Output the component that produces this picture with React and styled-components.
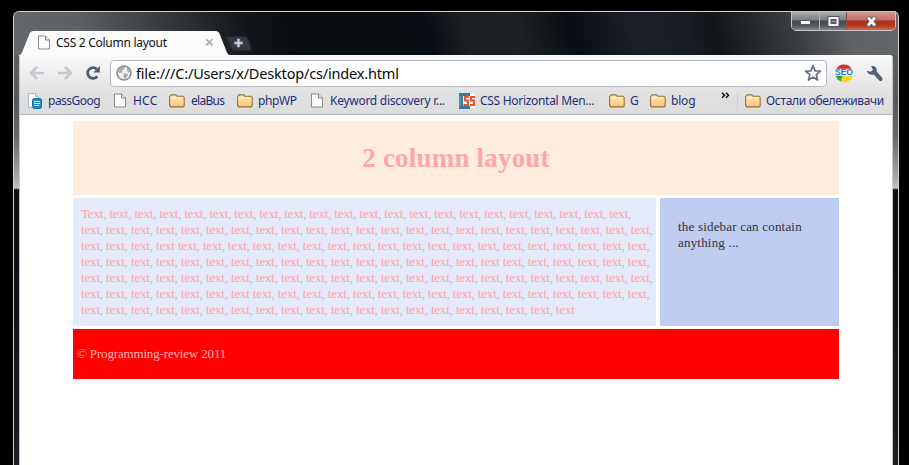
import React from "react";
import styled, { createGlobalStyle } from "styled-components";

const GlobalStyle = createGlobalStyle`
  * { box-sizing: border-box; }
  html, body { margin: 0; background: #000; overflow: hidden; }
  svg { display: block; flex: none; }
`;

const Desktop = styled.div`
  height: 465px;
  padding: 11px 10px 0 13px;
  background: #000;
  font-family: "Noto Sans", "Open Sans", sans-serif;
`;

const Window = styled.div`
  height: 454px;
  padding: 0 5px;
  border: 1px solid #d2d2d2;
  border-bottom: 0;
  border-radius: 6px 6px 0 0;
  background:
    linear-gradient(180deg, #65686a 0, #54585a 90px, #64686a 125px, #a5a7a8 165px, #c2c2c2 176px, #59686b 177px, #0b1014 178px, #0b1116 250px, #1a1f25 100%);
`;

const TitleBar = styled.div`
  display: flex;
  justify-content: space-between;
  height: 43px;
  margin: 0 -5px;
  padding-left: 4px;
  border-radius: 5px 5px 0 0;
  background: linear-gradient(75deg, #65686a 0, #5e6164 8%, #3a3d40 17%, #111519 27%, #090e13 32%, #090e14 47%, #1b1f24 51%, #1d2126 57%, #080e13 63%, #1b1f27 70%, #181c23 76%, #111519 79%, #3b3e40 88%, #606365 94%, #656869 100%);
`;

const TabStrip = styled.div`
  display: flex;
  padding-top: 18px;
`;

const Tab = styled.div`
  position: relative;
  width: 213px;
  height: 26px;
`;

const TabShape = styled.svg`
  position: absolute;
  inset: 0;
`;

const TabContent = styled.div`
  position: relative;
  display: flex;
  align-items: center;
  height: 25px;
  padding-left: 19px;
`;

const TabTitle = styled.span`
  width: 149px;
  margin-left: 5px;
  font: 12px/16px "Noto Sans", sans-serif;
  letter-spacing: -0.27px;
  white-space: nowrap;
  color: #111;
`;

const NewTab = styled.div`
  margin: 6px 0 0 -5px;
`;

const Caption = styled.div`
  display: flex;
  width: 105px;
  height: 20px;
  margin: -1px 2px 0 0;
  border: 1px solid #c4c6c8;
  border-radius: 0 0 5px 5px;
  overflow: hidden;
`;

const CaptionButton = styled.div`
  display: flex;
  align-items: center;
  justify-content: center;
  width: ${(p) => p.$width}px;
  border-left: ${(p) => (p.$first ? 0 : 1)}px solid ${(p) => (p.$close ? "#8d4b40" : "#b7b9bb")};
  background: ${(p) =>
    p.$close
      ? "linear-gradient(#d19a90 0, #c37064 8px, #ad2e1c 9px, #b63b25 14px, #d17153 100%)"
      : "linear-gradient(#aaaeb0 0, #7a7e81 8px, #45494d 9px, #565a5e 14px, #878b8f 100%)"};
`;

const Frame = styled.div`
  height: 410px;
  border: solid #c9c9c9;
  border-width: 0 1px;
  border-radius: 2px 3px 0 0;
  overflow: hidden;
  background: #fff;
`;

const Chrome = styled.div`
  height: 60px;
  border-bottom: 1px solid #b3b5bd;
  background: linear-gradient(#fbfbfb 0, #f3f3f3 10px, #e7e7e7 29px, #dfdfdf 45px, #dddddd 100%);
`;

const Navigation = styled.div`
  display: flex;
  align-items: center;
  height: 33px;
  padding: 3px 0 0 9px;
`;

const NavIcon = styled.div`
  width: ${(p) => p.$width}px;
`;

const AddressBar = styled.div`
  display: flex;
  align-items: center;
  width: 717px;
  height: 27px;
  padding: 0 4px 0 5px;
  border: 1px solid #b9bac0;
  border-radius: 4px;
  background: #fff;
`;

const Address = styled.span`
  flex: 1;
  margin-left: 4px;
  font: 14.5px/22px "Noto Sans", sans-serif;
  letter-spacing: -0.18px;
  color: #080808;
  white-space: nowrap;
`;

const Extension = styled.div`
  margin-left: ${(p) => p.$gap}px;
`;

const Bookmarks = styled.div`
  display: flex;
  align-items: center;
  height: 25px;
  padding-left: 7px;
`;

const Bookmark = styled.div`
  display: flex;
  flex: none;
  align-items: center;
  gap: ${(p) => p.$gap}px;
  width: ${(p) => p.$width}px;
  font: 12px/17px "Noto Sans", sans-serif;
  letter-spacing: ${(p) => p.$track || 0}px;
  color: #1f2f77;
  white-space: nowrap;
`;

const Overflow = styled.div`
  width: 16px;
  height: 17px;
`;

const Divider = styled.div`
  width: 1px;
  height: 18px;
  margin-right: 7px;
  background: #cbd0d6;
`;

const Page = styled.main`
  display: grid;
  grid-template-columns: 583px 179px;
  grid-template-rows: 74px 128px 50px;
  gap: 3px 4px;
  width: 766px;
  margin: 6px 0 0 53px;
  font: 13px/16px "Liberation Serif", serif;
`;

const Header = styled.header`
  grid-column: 1 / -1;
  padding: 21px 0 0;
  background: #ffeddd;
  text-align: center;
`;

const Heading = styled.h1`
  margin: 0;
  font-size: 27px;
  line-height: 32px;
  letter-spacing: 0.2px;
  color: #ffa6a6;
`;

const Article = styled.article`
  padding: 8px;
  background: #e5eafa;
  color: #ffa5a5;
  letter-spacing: -0.167px;
`;

const Line = styled.div`
  white-space: nowrap;
`;

const Sidebar = styled.aside`
  padding: 21px 18px;
  background: #bdccf0;
  color: #333;
  letter-spacing: 0.19px;
`;

const Footer = styled.footer`
  grid-column: 1 / -1;
  padding: 17px 4px;
  background: #f00;
  color: #ffb5b5;
  letter-spacing: -0.16px;
`;

const PageIcon = () => (
  <svg width="14" height="15" viewBox="0 0 14 15">
    <path d="M1.5 1h7l4 4v9h-11z" fill="#fbfbfb" stroke="#898989" />
    <path d="M8.5 1v4h4" fill="#e5e5e5" stroke="#898989" />
  </svg>
);

const FolderIcon = () => (
  <svg width="16" height="14" viewBox="0 0 16 14">
    <defs>
      <linearGradient id="folder" x2="0" y2="1">
        <stop stopColor="#ffeabc" />
        <stop offset="1" stopColor="#fac577" />
      </linearGradient>
    </defs>
    <path d="M.6 11.7V3L2 .9h4.8L8 2.4h6l1.2 1v8.3l-1.1 1.2H1.6z" fill="url(#folder)" stroke="#98703b" strokeWidth="1.1" />
    <path d="M1.5 4.2h4.8l1.3-.9h6.2" fill="none" stroke="#fff2cd" />
  </svg>
);

const NotesIcon = () => (
  <svg width="16" height="16" viewBox="0 0 16 16">
    <path d="M1.5.5h7l3 3v11h-10z" fill="#f8fbfd" stroke="#a3bac7" />
    <path d="M8.5.5v3h3" fill="#dfeaf0" stroke="#a3bac7" />
    <rect x="5.5" y="5.5" width="9" height="10" rx="2" fill="#238bc2" stroke="#176c9f" />
    <path d="M7 8.5h6M7 10.5h6M7 12.5h5" stroke="#e6f6fc" />
  </svg>
);

const StylesheetIcon = () => (
  <svg width="16" height="16" viewBox="0 0 16 16">
    <path d="M0 0h11v16H0z" fill="#347f9f" />
    <path d="M11 0h5v16h-5z" fill="#f0f2f3" />
    <path d="M4 3h12v10H4z" fill="#faf5f1" />
    <path d="M9.500 4H6v3.500h3V12H4.500M16 4h-4v3.500h3V12h-4" fill="none" stroke="#eb512d" strokeWidth="1.900" />
    <path d="M0 3h2v10H0z" fill="#5b96b1" />
  </svg>
);

const ArrowIcon = ({ back }) => (
  <svg width="16" height="14" viewBox="0 0 16 14">
    <path
      d={back ? "M8 1 2 7l6 6M2.5 7H15" : "m8 1 6 6-6 6M13.5 7H1"}
      fill="none" stroke="#c6c9d1" strokeWidth="2.7" strokeLinejoin="round"
    />
  </svg>
);

const ReloadIcon = () => (
  <svg width="16" height="16" viewBox="0 0 16 16">
    <path d="M12.3 11.3A5.4 5.4 0 1 1 11.7 4" fill="none" stroke="#4f596d" strokeWidth="2.8" />
    <path d="M14.8 1v6.5H8.3z" fill="#4f596d" />
  </svg>
);

const GlobeIcon = () => (
  <svg width="16" height="16" viewBox="0 0 16 16">
    <circle cx="8" cy="8" r="7" fill="#eee" stroke="#8e8e8e" strokeWidth="1.6" />
    <path d="m2 5 3-3 4 .2-1 2-2 1 .5 2L4 8 2 7zM8 8l4 1.2-1.3 3-2.1 2-1-3zM11 2l3 4-1 2-2-2z" fill="#a8a8a8" />
  </svg>
);

const StarIcon = () => (
  <svg width="18" height="18" viewBox="0 0 18 18">
    <path d="m9 1.500 2 5.400 5.500.2-4.300 3.500 1.400 5.400L9 13l-4.600 3 1.400-5.400-4.300-3.500L7 6.900z" fill="#fff" stroke="#687084" strokeWidth="1.7" strokeLinejoin="round" />
  </svg>
);

const SeoIcon = () => (
  <svg width="20" height="20" viewBox="0 0 20 20">
    <path d="M2 7A8.6 8.6 0 0 1 18 7L10 9z" fill="#d43028" />
    <path d="M1.5 7 10 10l-3 8.4A9 9 0 0 1 1.5 7" fill="#35a444" />
    <path d="M18.5 7A9 9 0 0 1 6.5 18.4L10 10z" fill="#fcd51a" />
    <path d="M1 5.800h18v7H1z" fill="#e9f3fc" />
    <text x="10" y="12.2" textAnchor="middle" textLength="18" lengthAdjust="spacingAndGlyphs" fontFamily="Liberation Sans" fontSize="8.8" fontWeight="bold" fill="#247ccc">SEO</text>
  </svg>
);

const WrenchIcon = () => (
  <svg width="17" height="17" viewBox="0 0 17 17">
    <path d="M5.1 1.1c4-.7 6.3 2 5.5 5.4l5.2 5.7c1.1 1.3.9 2.8-.1 3.5-1 .7-2.2.4-3.1-.7L7.7 9.5C4.4 10.5 1 8.7.8 5.8l3.8 1L7 5z" fill="#526079" />
  </svg>
);

const CloseIcon = () => (
  <svg width="9" height="9" viewBox="0 0 9 9">
    <path d="m1.2 1.2 6.2 6.2m0-6.2L1.2 7.4" stroke="#a5a5a5" strokeWidth="1.5" />
  </svg>
);

const BOOKMARKS = [
  { label: "passGoog", Icon: NotesIcon, width: 86, gap: 5, track: -0.5 },
  { label: "HCC", Icon: PageIcon, width: 56, gap: 6, track: 0.2 },
  { label: "elaBus", Icon: FolderIcon, width: 68, gap: 6, track: -0.7 },
  { label: "phpWP", Icon: FolderIcon, width: 73, gap: 5, track: -0.4 },
  { label: "Keyword discovery r...", Icon: PageIcon, width: 149, gap: 6, track: -0.27 },
  { label: "CSS Horizontal Men...", Icon: StylesheetIcon, width: 150, gap: 5, track: -0.3 },
  { label: "G", Icon: FolderIcon, width: 41, gap: 5 },
  { label: "blog", Icon: FolderIcon, width: 71, gap: 5, track: -0.2 },
];

/* Each row holds its word count and the index of a word with no comma. */
const ROWS = [[22, -1], [23, -1], [23, 3], [23, 16], [23, -1], [23, 6], [20, 19]];

const makeRow = ([count, plain], row) =>
  Array.from({ length: count }, (_, i) =>
    (row === 0 && i === 0 ? "Text" : "text") + (i === plain ? "" : ",")
  ).join(" ");

export default function App() {
  return (
    <Desktop>
      <GlobalStyle />
      <Window>
        <TitleBar>
          <TabStrip>
            <Tab>
              <TabShape width="213" height="26" viewBox="0 0 213 26">
                <path d="M0 26c3-1 4-3 5-6l6-15c1-3 2-4 5-4h181c3 0 4 1 5 4l6 15c1 3 2 5 5 6z" fill="#fbfbfb" />
              </TabShape>
              <TabContent>
                <PageIcon />
                <TabTitle>CSS 2 Column layout</TabTitle>
                <CloseIcon />
              </TabContent>
            </Tab>
            <NewTab>
              <svg width="26" height="15" viewBox="0 0 26 15">
                <path d="M2 .5h17q2 0 3 3l3 8q0 3-2 3H8q-2 0-3-3L1 3q-1-2 1-2.500" fill="#34383e" stroke="#24282c" />
                <path d="M12.500 2.500v9M8 7h9" stroke="#667793" strokeWidth="3.400" />
                <path d="M12.500 3v8M8.500 7h8" stroke="#d3ddea" strokeWidth="1.600" />
              </svg>
            </NewTab>
          </TabStrip>
          <Caption>
            <CaptionButton $width={27} $first>
              <svg width="13" height="8" viewBox="0 0 13 8"><path d="M1.500 3.500h10v4h-10z" fill="#fff" stroke="#545860" /></svg>
            </CaptionButton>
            <CaptionButton $width={27}>
              <svg width="13" height="11" viewBox="0 0 13 11">
                <path d="M2.500 2h8v7h-8z" fill="none" stroke="#505765" strokeWidth="4" />
                <path d="M2.500 2h8v7h-8z" fill="#555b67" stroke="#f7f7f7" strokeWidth="2" />
                <path d="M4.500 5.500h4" stroke="#a9acb0" />
              </svg>
            </CaptionButton>
            <CaptionButton $width={49} $close>
              <svg width="13" height="11" viewBox="0 0 13 11">
                <path d="m2.500 1 8 9m0-9-8 9" stroke="#61545d" strokeWidth="4.600" />
                <path d="m3 1.500 7 8m0-8-7 8" stroke="#fff" strokeWidth="2.800" />
              </svg>
            </CaptionButton>
          </Caption>
        </TitleBar>
        <Frame>
          <Chrome>
            <Navigation>
              <NavIcon $width={28}><ArrowIcon back /></NavIcon>
              <NavIcon $width={28}><ArrowIcon /></NavIcon>
              <NavIcon $width={25}><ReloadIcon /></NavIcon>
              <AddressBar>
                <GlobeIcon />
                <Address>file:///C:/Users/x/Desktop/cs/index.html</Address>
                <StarIcon />
              </AddressBar>
              <Extension $gap={7}><SeoIcon /></Extension>
              <Extension $gap={12}><WrenchIcon /></Extension>
            </Navigation>
            <Bookmarks>
              {BOOKMARKS.map(({ label, Icon, width, gap, track }) => (
                <Bookmark key={label} $width={width} $gap={gap} $track={track}>
                  <Icon />
                  {label}
                </Bookmark>
              ))}
              <Overflow>
                <svg width="9" height="7" viewBox="0 0 9 7">
                  <path d="m1 .8 2.500 2.500L1 5.800M5 .8l2.500 2.500L5 5.800" fill="none" stroke="#111" strokeWidth="1.500" />
                </svg>
              </Overflow>
              <Divider />
              <Bookmark $width={144} $gap={5} $track={-0.32}>
                <FolderIcon />
                Остали обележивачи
              </Bookmark>
            </Bookmarks>
          </Chrome>
          <Page>
            <Header><Heading>2 column layout</Heading></Header>
            <Article>
              {ROWS.map((row, i) => <Line key={i}>{makeRow(row, i)}</Line>)}
            </Article>
            <Sidebar>the sidebar can contain anything ...</Sidebar>
            <Footer>© Programming-review 2011</Footer>
          </Page>
        </Frame>
      </Window>
    </Desktop>
  );
}
